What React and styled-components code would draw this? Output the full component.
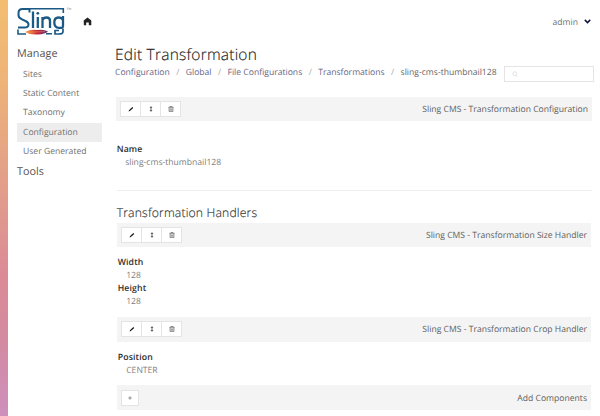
import React from "react";
import styled, { createGlobalStyle } from "styled-components";

const Global = createGlobalStyle`
  * { box-sizing: border-box; }
  html, body { margin: 0; background: #fff; overflow: hidden; }
  body {
    font-family: "Open Sans", sans-serif;
    font-size: 8.6px;
    font-weight: 400;
    color: #707070;
    letter-spacing: 0;
    text-rendering: geometricPrecision;
  }
  h1, h2, dl, dd, dt, p, ul, ol { margin: 0; padding: 0; }
`;

const Page = styled.div`
  display: grid;
  grid-template-columns: 8px 108px minmax(0, 1fr);
  width: 600px;
  height: 416px;
`;
const Ribbon = styled.div`
  background: linear-gradient(#f3bd70 0%, #edb378 20%, #e3a088 42%, #db8b96 66%, #d48a9f 80%, #cd8fbb 100%);
`;
const Side = styled.aside`
  padding: 6px 14px 0 9px;
`;
const Brand = styled.div`
  display: flex;
  height: 37px;
  gap: 9px;
  width: 90px;
`;
const HomeIcon = styled.svg`
  width: 9px;
  height: 9px;
  margin-top: 11px;
  flex: none;
`;
const MenuTitle = styled.h2`
  height: 21.8px;
  line-height: 22px;
  font-size: 10.8px;
  font-weight: 400;
  color: #555;
  letter-spacing: 0.05px;
`;
const Menu = styled.ul`
  list-style: none;
`;
const MenuItem = styled.li`
  height: 19.3px;
  line-height: 19px;
  padding-left: 6px;
  white-space: nowrap;
  background: ${(p) => (p.$active ? "#ededed" : "transparent")};
`;
const Main = styled.main`
  display: flex;
  flex-direction: column;
  padding-right: 8px;
`;
const Account = styled.div`
  display: flex;
  justify-content: flex-end;
  align-items: center;
  gap: 6px;
  height: 43px;
  padding-right: 1px;
`;
const Chevron = styled.svg`
  width: 7px;
  height: 5px;
`;
const Title = styled.h1`
  height: 23px;
  line-height: 23px;
  margin-left: -1px;
  font-size: 15.5px;
  font-weight: 300;
  color: #222;
  letter-spacing: 0.22px;
  -webkit-text-stroke: 0.15px currentColor;
`;
const CrumbRow = styled.div`
  display: flex;
  justify-content: space-between;
  height: 31px;
  margin: 0 -2px 0 -1px;
`;
const Crumb = styled.li`
  color: ${(p) => (p.$current ? "#666" : "#666688")};
`;
const Crumbs = styled.ol`
  display: flex;
  list-style: none;
  line-height: 13px;
  white-space: nowrap;
  ${Crumb} + ${Crumb}::before {
    content: "/";
    color: #aaa;
    margin: 0 6.4px;
  }
`;
const Search = styled.div`
  width: 90px;
  height: 16px;
  border: 1px solid #e4e4e4;
  padding: 4px 7px;
  line-height: 0;
`;
const Bar = styled.section`
  display: flex;
  align-items: center;
  justify-content: space-between;
  flex: none;
  height: 24.4px;
  padding: 0 4px 0 4.1px;
  margin-left: ${(p) => (p.$nested ? 1.3 : 0.4)}px;
  margin-right: ${(p) => (p.$nested ? 1 : 0)}px;
  background: #f4f4f4;
`;
const BarLabel = styled.span`
  color: #606060;
`;
const Buttons = styled.div`
  display: flex;
`;
const Button = styled.button`
  display: flex;
  align-items: center;
  justify-content: center;
  width: ${(p) => (p.$single ? 17.5 : 21)}px;
  height: 16px;
  padding: 0;
  background: #fff;
  border: 1px solid #e4e4e4;
  & + & { margin-left: -1px; }
`;
const Glyph = styled.svg`
  width: 6px;
  height: 6px;
  display: block;
`;
const Fields = styled.dl`
  flex: none;
  height: ${(p) => p.$h}px;
  padding: ${(p) => p.$top}px 0 0 ${(p) => (p.$nested ? 1.7 : 0.7)}px;
`;
const Term = styled.dt`
  height: 13px;
  line-height: 12.6px;
  font-size: 8.7px;
  font-weight: 600;
  color: #2c2c2c;
  letter-spacing: 0.15px;
`;
const Value = styled.dd`
  height: 13px;
  line-height: 12.6px;
  padding-left: 8.5px;
  color: #808080;
`;
const SectionTitle = styled.h2`
  flex: none;
  height: 33px;
  margin-left: 0.7px;
  padding-top: 13px;
  line-height: 17px;
  border-top: 1px solid #eee;
  font-size: 12.2px;
  font-weight: 300;
  color: #333;
  letter-spacing: 0.15px;
  -webkit-text-stroke: 0.15px currentColor;
`;

const Logo = () => (
  <svg width="57" height="30" viewBox="0 0 57 30">
    <g fill="none" stroke="#1b5a86" strokeWidth="2">
      <path d="M12.5 6.5V3H5.5Q1.5 3 1.5 7V9Q1.5 12 5 13.3L8.5 15Q11.5 16.3 11.5 18.5Q11.5 21.5 7.5 21.5H1" />
      <path d="M7 2.8H46.3V7" strokeWidth="1.6" />
      <path d="M1 23.5V28H9M29 27.8H35" strokeWidth="1.6" />
      <path d="M16 5.5V22M20.8 11V22M25.5 22V11M25.5 14Q26.5 11.5 29.5 11.5Q33 11.5 33 15V22" strokeWidth="2.3" />
      <path d="M46 10V20Q46 22.5 42 21.8Q37.3 21.8 37.3 16.5Q37.3 11.5 41.5 11.5Q44.5 11.5 45.5 13.5" strokeWidth="2.3" />
      <path d="M46 22.5V25.5Q46 28 42 28H38V24.5H42" strokeWidth="1.7" />
    </g>
    <circle cx="20.8" cy="7.3" r="1.4" fill="#1b5a86" />
    <defs>
      <linearGradient id="feather">
        <stop offset="0" stopColor="#f0a040" />
        <stop offset=".25" stopColor="#e9703d" />
        <stop offset=".5" stopColor="#c92f37" />
        <stop offset=".8" stopColor="#8b2461" />
        <stop offset="1" stopColor="#514078" />
      </linearGradient>
    </defs>
    <path d="M8 26Q14 22.8 20 24Q27 23 31 25.5Q28 28 21 28.5Q13 29 8 26Z" fill="url(#feather)" />
    <path d="M10 26.3L28 25.6" stroke="#f0a36b" strokeWidth=".5" />
    <path d="M49.5 2H52M50.7 2V4M52.3 4V2L53 3.5L53.8 2V4" fill="none" stroke="#aaa" strokeWidth=".5" />
  </svg>
);

const Pencil = () => (
  <Glyph viewBox="0 0 6 6"><path d="M.6 5.5L1 4.3L4.3 1.1L5.2 2L1.9 5Z" fill="#111" /></Glyph>
);
const Move = () => (
  <Glyph viewBox="0 0 6 6"><path d="M3 .3L4.5 1.8H3.4V4.2H4.5L3 5.7L1.5 4.2H2.6V1.8H1.5Z" fill="#444" /></Glyph>
);
const Trash = () => (
  <Glyph viewBox="0 0 6 6">
    <path d="M.4 1.3H5.6M2 1.2V.4H4V1.2M1.1 1.5V5.6H4.9V1.5M2.3 2.4V4.8M3.7 2.4V4.8" fill="none" stroke="#555" strokeWidth=".65" />
  </Glyph>
);

const EditBar = ({ label, nested }) => (
  <Bar $nested={nested}>
    <Buttons>
      <Button aria-label="Edit"><Pencil /></Button>
      <Button aria-label="Move"><Move /></Button>
      <Button aria-label="Delete"><Trash /></Button>
    </Buttons>
    <BarLabel>{label}</BarLabel>
  </Bar>
);

const menuItems = ["Sites", "Static Content", "Taxonomy", "Configuration", "User Generated"];
const crumbs = ["Configuration", "Global", "File Configurations", "Transformations", "sling-cms-thumbnail128"];

export default function App() {
  return (
    <>
      <Global />
      <Page>
        <Ribbon />
        <Side>
          <Brand>
            <Logo />
            <HomeIcon viewBox="0 0 9 9">
              <path d="M.7 4.3V3.6L4.5 .6L8.3 3.6V8.3H5.8V5.5H3.2V8.3H.9Z" fill="#222" />
            </HomeIcon>
          </Brand>
          <MenuTitle>Manage</MenuTitle>
          <Menu>
            {menuItems.map((t) => (
              <MenuItem key={t} $active={t === "Configuration"}>{t}</MenuItem>
            ))}
          </Menu>
          <MenuTitle>Tools</MenuTitle>
        </Side>
        <Main>
          <Account>
            admin
            <Chevron viewBox="0 0 7 5"><path d="M.8 .9L3.5 3.6L6.2 .9" fill="none" stroke="#11113a" strokeWidth="1.5" /></Chevron>
          </Account>
          <Title>Edit Transformation</Title>
          <CrumbRow>
            <Crumbs>
              {crumbs.map((c, i) => (
                <Crumb key={c} $current={i === crumbs.length - 1}>{c}</Crumb>
              ))}
            </Crumbs>
            <Search>
              <svg width="6" height="6" viewBox="0 0 6 6" fill="none" stroke="#ddd" strokeWidth=".8">
                <circle cx="2.7" cy="2.7" r="2" /><path d="M4.2 4.2L5.6 5.6" />
              </svg>
            </Search>
          </CrumbRow>
          <EditBar label="Sling CMS - Transformation Configuration" />
          <Fields $h={68.6} $top={21.5}>
            <Term>Name</Term>
            <Value>sling-cms-thumbnail128</Value>
          </Fields>
          <SectionTitle>Transformation Handlers</SectionTitle>
          <EditBar nested label="Sling CMS - Transformation Size Handler" />
          <Fields $nested $h={69.8} $top={9}>
            <Term>Width</Term>
            <Value>128</Value>
            <Term>Height</Term>
            <Value>128</Value>
          </Fields>
          <EditBar nested label="Sling CMS - Transformation Crop Handler" />
          <Fields $nested $h={43.9} $top={9}>
            <Term>Position</Term>
            <Value>CENTER</Value>
          </Fields>
          <Bar $nested>
            <Button $single aria-label="Add">
              <Glyph viewBox="0 0 6 6"><path d="M3 1.3V4.7M1.3 3H4.7" stroke="#888" strokeWidth=".9" /></Glyph>
            </Button>
            <BarLabel>Add Components</BarLabel>
          </Bar>
        </Main>
      </Page>
    </>
  );
}
